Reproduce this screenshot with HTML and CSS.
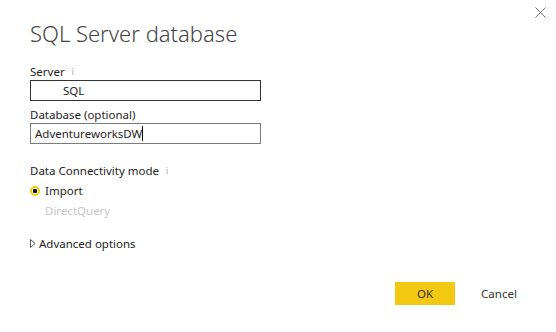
FILE: index.html
```html
<!DOCTYPE html>
<html lang="en">
<head>
    <meta charset="UTF-8">
    <title>SQL Server database</title>
    <link rel="stylesheet" href="styles.css">
</head>
<body>
    <div class="dialog">
        <button class="close-button" aria-label="Close">
            <svg width="11" height="11" viewBox="0 0 11 11"><path d="M0.5 0.5 L10.5 10.5 M10.5 0.5 L0.5 10.5" stroke="#777" stroke-width="1"/></svg>
        </button>

        <h1>SQL Server database</h1>

        <div class="field">
            <label>Server <span class="info">i</span></label>
            <div class="text-box focused"><span class="server-name">SQL</span></div>
        </div>

        <div class="field">
            <label>Database (optional)</label>
            <div class="text-box">AdventureworksDW<span class="caret"></span></div>
        </div>

        <div class="mode">
            <div class="mode-title">Data Connectivity mode <span class="info">i</span></div>
            <div class="radio checked"><span class="dot"></span>Import</div>
            <div class="radio disabled">DirectQuery</div>
        </div>

        <div class="advanced">
            <svg width="6" height="9" viewBox="0 0 6 9"><path d="M0.5 0.5 L5 4.5 L0.5 8.5 Z" fill="none" stroke="#555" stroke-width="1"/></svg>
            Advanced options
        </div>

        <div class="footer">
            <button class="ok-button">OK</button>
            <button class="cancel-button">Cancel</button>
        </div>
    </div>
</body>
</html>
```

FILE: styles.css
```css
body {
    margin: 0;
    background-color: #fff;
    font-family: 'Segoe UI', 'Noto Sans', sans-serif;
    color: #252423;
}

.dialog {
    position: relative;
    height: 332px;
    box-sizing: border-box;
    padding: 18px 0 0 30px;
    display: flex;
    flex-direction: column;
}

.close-button {
    position: absolute;
    top: 7px;
    right: 10px;
    border: none;
    background: none;
    padding: 0;
    line-height: 0;
}

h1 {
    margin: 0 0 16px;
    font-size: 22px;
    font-weight: 300;
    color: #444;
}

.field {
    margin-bottom: 6px;
}

label,
.mode-title {
    display: block;
    font-size: 11.5px;
    line-height: 16px;
}

.info {
    font-size: 8px;
    color: #999;
    margin-left: 4px;
    vertical-align: 1px;
}

.text-box {
    width: 225px;
    height: 19px;
    border: 1px solid #7a7a7a;
    font-size: 11.5px;
    line-height: 19px;
    padding-left: 4px;
    box-sizing: content-box;
}

.text-box.focused {
    border-color: #333;
}

.server-name {
    margin-left: 28px;
}

.caret {
    display: inline-block;
    width: 1px;
    height: 15px;
    background-color: #000;
    vertical-align: -3px;
}

.mode {
    margin-top: 13px;
}

.radio {
    font-size: 11.5px;
    line-height: 16px;
    margin-top: 4px;
    display: flex;
    align-items: center;
}

.radio.checked .dot {
    width: 6px;
    height: 6px;
    border: 2px solid #f2c811;
    border-radius: 50%;
    box-sizing: content-box;
    background: radial-gradient(circle, #111 0 2px, #fff 2.5px);
    margin-right: 5px;
}

.radio.disabled {
    color: #c8c8c8;
    padding-left: 15px;
    margin-top: 4px;
}

.advanced {
    margin-top: 17px;
    font-size: 11.5px;
    display: flex;
    align-items: center;
    gap: 3px;
}

.footer {
    margin-top: auto;
    margin-bottom: 27px;
    display: flex;
    justify-content: flex-end;
    align-items: center;
    padding-right: 29px;
}

.ok-button {
    width: 60px;
    height: 23px;
    border: none;
    background-color: #f2c811;
    font-family: inherit;
    font-size: 11.5px;
    color: #333;
}

.cancel-button {
    margin-left: 16px;
    width: 56px;
    height: 23px;
    border: none;
    background: none;
    font-family: inherit;
    font-size: 11.5px;
    color: #333;
}
```
